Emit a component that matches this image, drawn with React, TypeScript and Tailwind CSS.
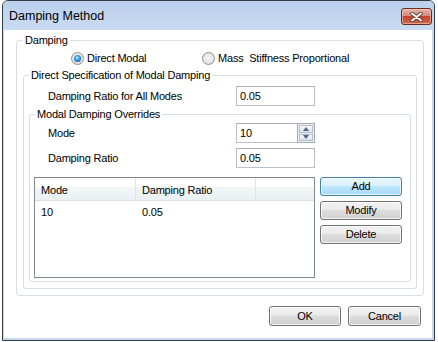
import React from "react";

function Radio({ checked }: { checked?: boolean }) {
  return (
    <span className="w-[13px] h-[13px] shrink-0 rounded-full border border-[#8e8f8f] bg-[radial-gradient(circle_at_50%_45%,#f6f6f6_0%,#e4e4e4_60%,#cfcfcf_100%)] flex items-center justify-center">
      {checked && (
        <span className="w-[7px] h-[7px] rounded-full bg-[radial-gradient(circle_at_45%_40%,#b4f0ff_0%,#2f93dc_45%,#0b3a74_100%)]" />
      )}
    </span>
  );
}

function TextBox({ value }: { value: string }) {
  return (
    <div className="w-[79px] h-[20px] border border-[#b9c0c9] border-t-[#a9afb8] bg-white flex items-center pl-[3px]">
      {value}
    </div>
  );
}

function Spin({ value }: { value: string }) {
  return (
    <div className="flex h-[20px]">
      <div className="w-[61px] h-full border border-r-0 border-[#b9c0c9] border-t-[#a9afb8] bg-white flex items-center pl-[3px]">
        {value}
      </div>
      <div className="w-[18px] h-full flex flex-col gap-[1px] border border-[#a4aab3] bg-[#e9edf2] p-[1px]">
        <div className="flex-1 border border-[#b6bfca] bg-[linear-gradient(#f5f7fa,#dde3ea)] flex items-center justify-center">
          <svg width="6" height="4" viewBox="0 0 6 4">
            <path d="M0 4 L3 0 L6 4 Z" fill="#4e6289" />
          </svg>
        </div>
        <div className="flex-1 border border-[#b6bfca] bg-[linear-gradient(#f5f7fa,#dde3ea)] flex items-center justify-center">
          <svg width="6" height="4" viewBox="0 0 6 4">
            <path d="M0 0 L6 0 L3 4 Z" fill="#4e6289" />
          </svg>
        </div>
      </div>
    </div>
  );
}

function Button({
  label,
  className,
  isDefault,
}: {
  label: string;
  className: string;
  isDefault?: boolean;
}) {
  return (
    <button
      className={
        isDefault
          ? `${className} rounded-[3px] border border-[#3c7fb1] bg-[linear-gradient(#eaf6fd_0%,#d9f0fc_45%,#bee6fd_50%,#a7d9f5_100%)] shadow-[inset_0_0_0_1px_rgba(255,255,255,0.7)] flex items-center justify-center`
          : `${className} rounded-[3px] border border-[#707070] bg-[linear-gradient(#f2f2f2_0%,#ebebeb_45%,#dddddd_50%,#cfcfcf_100%)] shadow-[inset_0_0_0_1px_rgba(255,255,255,0.8)] flex items-center justify-center`
      }
    >
      {label}
    </button>
  );
}

export default function App() {
  return (
    <div className="w-[438px] h-[342px] bg-white font-['Liberation_Sans',Arial,sans-serif] text-[11px] tracking-[-0.2px] text-black">
      <div className="ml-[2px] w-[433px] h-[341px] border border-[#333d48] rounded-t-[6px] bg-[#c6d9f0] flex flex-col overflow-hidden">
        {/* title bar */}
        <div className="h-[29px] flex items-start justify-between pl-[6px] pr-[2px] bg-[linear-gradient(#bad0ec,#c9dbf1)]">
          <span className="mt-[7px] text-[12.5px] leading-[16px] tracking-normal">Damping Method</span>
          <div className="mt-[7px] w-[31px] h-[17px] rounded-[3px] border border-[#6b2b23] bg-[linear-gradient(#e8b2a6_0%,#d58a78_45%,#c2442e_50%,#d4664f_100%)] shadow-[inset_0_0_0_1px_rgba(255,220,210,0.5)] flex items-center justify-center">
            <svg width="13" height="10" viewBox="0 0 13 10">
              <path d="M2 1.5 L11 8.5 M11 1.5 L2 8.5" stroke="#5a3a36" strokeWidth="3.6" strokeLinecap="round" />
              <path d="M2 1.5 L11 8.5 M11 1.5 L2 8.5" stroke="#ffffff" strokeWidth="2" strokeLinecap="round" />
            </svg>
          </div>
        </div>

        {/* client */}
        <div className="ml-[1px] mr-[2px] h-[308px] bg-white flex flex-col">
          <fieldset className="mt-[4px] ml-[12px] w-[408px] h-[262px] border border-[#d5dfe5] rounded-[3px]">
            <legend className="ml-[6px] px-[2px] leading-[13px]">Damping</legend>
            <div className="mt-[5px] h-[13px] flex items-center pl-[54px]">
              <label className="w-[131px] flex items-center gap-[3px]">
                <Radio checked />
                <span className="leading-[13px]">Direct Modal</span>
              </label>
              <label className="flex items-center gap-[3px]">
                <Radio />
                <span className="leading-[13px] whitespace-pre">Mass  Stiffness Proportional</span>
              </label>
            </div>

            <fieldset className="mt-[4px] ml-[6px] w-[394px] h-[220px] border border-[#d5dfe5] rounded-[3px]">
              <legend className="ml-[5px] px-[2px] leading-[13px]">
                Direct Specification of Modal Damping
              </legend>
              <div className="mt-[4px] pl-[24px] flex items-center">
                <span className="w-[188px]">Damping Ratio for All Modes</span>
                <TextBox value="0.05" />
              </div>

              <fieldset className="mt-[2px] ml-[5px] w-[382px] h-[174px] border border-[#d5dfe5] rounded-[3px]">
                <legend className="ml-[5px] px-[2px] leading-[13px]">Modal Damping Overrides</legend>
                <div className="mt-[2px] pl-[18px] flex items-center">
                  <span className="w-[188px]">Mode</span>
                  <Spin value="10" />
                </div>
                <div className="mt-[5px] pl-[18px] flex items-center">
                  <span className="w-[188px]">Damping Ratio</span>
                  <TextBox value="0.05" />
                </div>

                <div className="mt-[9px] ml-[4px] flex gap-[5px]">
                  <div className="w-[281px] h-[101px] border border-[#828790] bg-white">
                    <div className="flex h-[23px] border-b border-[#d8dde2] bg-[linear-gradient(#ffffff_0%,#ffffff_40%,#f1f6f7_41%,#ebf1f2_100%)]">
                      <div className="w-[101px] border-r border-[#dde3e7] pl-[6px] pt-[4px] leading-[16px]">
                        Mode
                      </div>
                      <div className="w-[120px] border-r border-[#dde3e7] pl-[6px] pt-[4px] leading-[16px]">
                        Damping Ratio
                      </div>
                      <div className="flex-1" />
                    </div>
                    <div className="flex pt-[3px] leading-[16px]">
                      <div className="w-[101px] pl-[6px]">10</div>
                      <div className="pl-[6px]">0.05</div>
                    </div>
                  </div>

                  <div className="flex flex-col gap-[5px]">
                    <Button label="Add" className="w-[82px] h-[19px]" isDefault />
                    <Button label="Modify" className="w-[82px] h-[19px]" />
                    <Button label="Delete" className="w-[82px] h-[19px]" />
                  </div>
                </div>
              </fieldset>
            </fieldset>
          </fieldset>

          <div className="mt-[10px] pr-[11px] flex justify-end gap-[7px]">
            <Button label="OK" className="w-[72px] h-[20px]" />
            <Button label="Cancel" className="w-[73px] h-[20px]" />
          </div>
        </div>
      </div>
    </div>
  );
}
